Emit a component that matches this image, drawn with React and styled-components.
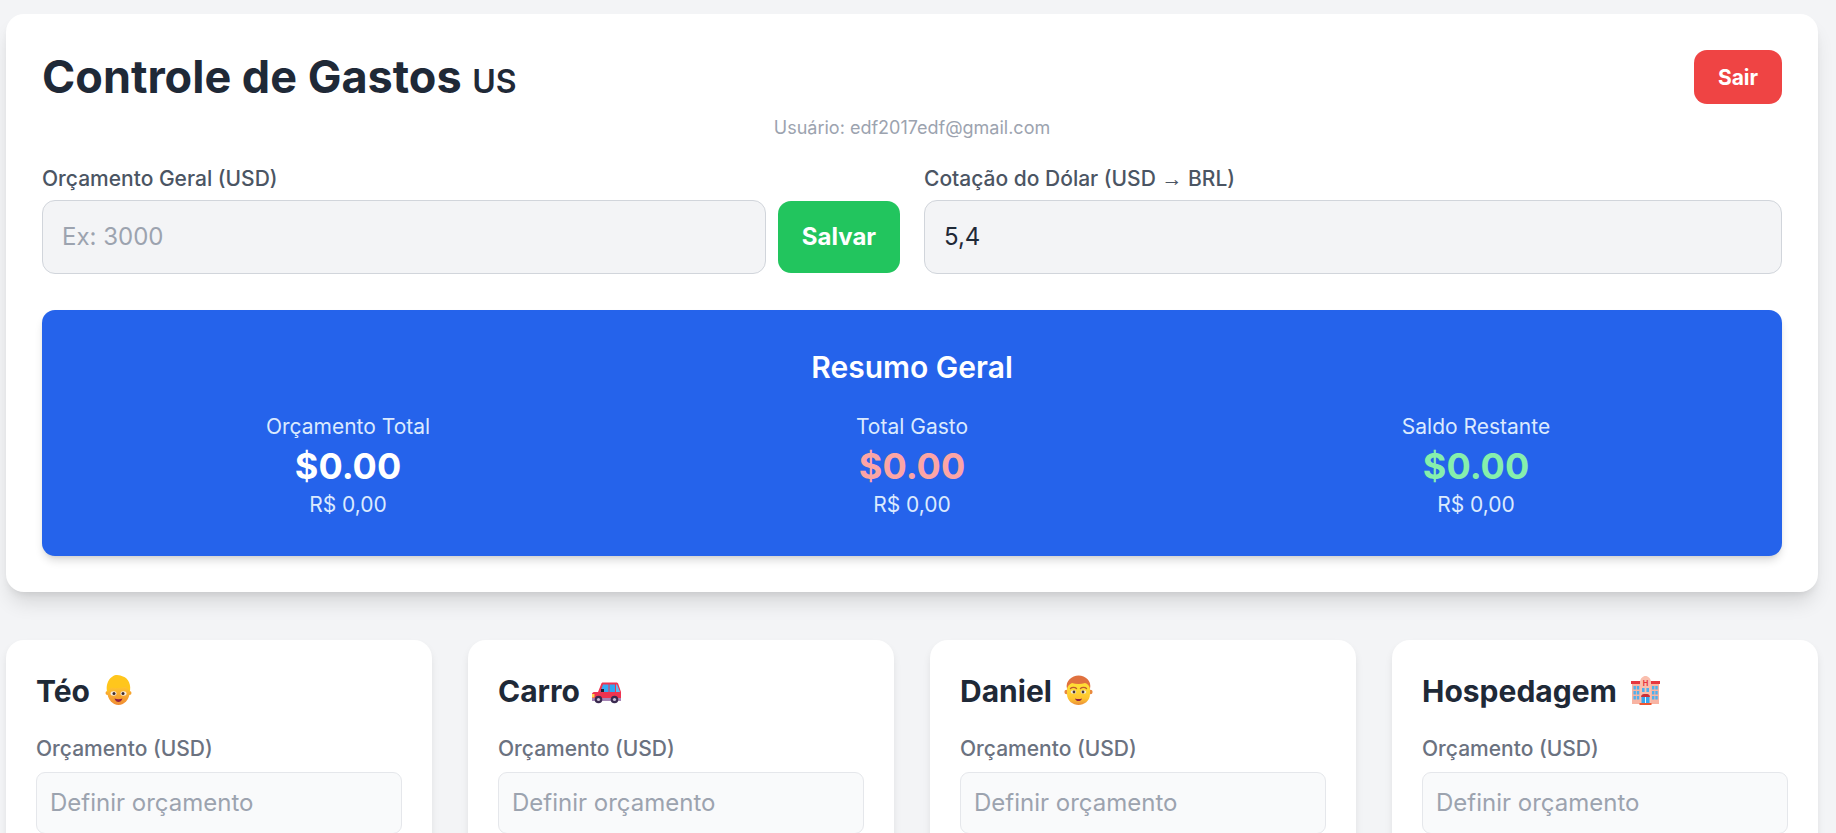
import { createGlobalStyle, styled } from "styled-components";

const GlobalStyle = createGlobalStyle`
  * { box-sizing: border-box; }
  html, body { margin: 0; height: 100%; overflow: hidden; }
  body {
    background: #f3f4f6;
    font-family: Inter, "Liberation Sans", sans-serif;
    color: #1f2937;
  }
`;

const Page = styled.div`
  padding: 14px 18px 0 6px;
`;

const Panel = styled.section`
  background: #fff;
  border-radius: 18px;
  padding: 36px;
  box-shadow: 0 14px 20px -4px rgba(0, 0, 0, 0.12), 0 5px 8px -4px rgba(0, 0, 0, 0.1);
`;

const Header = styled.header`
  display: flex;
  justify-content: space-between;
  align-items: center;
  height: 54px;
`;

const Title = styled.h1`
  margin: 0;
  font-size: 45px;
  line-height: 54px;
  font-weight: 700;
  color: #1f2937;
`;

const Flag = styled.span`
  font-size: 32px;
  line-height: 1;
  font-weight: 600;
`;

const LogoutButton = styled.button`
  height: 54px;
  width: 88px;
  border: 0;
  border-radius: 13px;
  background: #ef4444;
  color: #fff;
  font: 700 21px Inter, sans-serif;
`;

const UserLine = styled.p`
  margin: 10px 0 0;
  text-align: center;
  font-size: 18px;
  line-height: 27px;
  color: #9ca3af;
`;

const FormGrid = styled.div`
  display: grid;
  grid-template-columns: 1fr 1fr;
  gap: 24px;
  margin-top: 22px;
`;

const Field = styled.div`
  display: flex;
  flex-direction: column;
  gap: 5px;
`;

const Label = styled.label`
  font-size: 21px;
  line-height: 32px;
  font-weight: 500;
  color: #4b5563;
`;

const Arrow = styled.span`
  font-family: "Liberation Sans", sans-serif;
  font-weight: 400;
`;

const InputRow = styled.div`
  display: flex;
  gap: 12px;
`;

const MainInput = styled.input`
  flex: 1;
  min-width: 0;
  height: 74px;
  padding: 0 19px 2px;
  background: #f3f4f6;
  border: 1px solid #d1d5db;
  border-radius: 13px;
  font: 400 24px Inter, sans-serif;
  color: #1f2937;
  &::placeholder { color: #9ca3af; opacity: 1; }
`;

const SaveButton = styled.button`
  width: 122px;
  height: 72px;
  margin-top: 1px;
  padding: 0 0 2px;
  border: 0;
  border-radius: 13px;
  background: #22c55e;
  color: #fff;
  font: 700 24px Inter, sans-serif;
`;

const Summary = styled.div`
  margin-top: 36px;
  background: #2563eb;
  border-radius: 13px;
  padding: 37px 24px;
  height: 246px;
  color: #fff;
  box-shadow: 0 6px 10px -2px rgba(0, 0, 0, 0.16), 0 2px 4px -2px rgba(0, 0, 0, 0.1);
`;

const SummaryTitle = styled.h2`
  margin: 0;
  text-align: center;
  font-size: 30px;
  line-height: 41px;
  font-weight: 600;
`;

const StatGrid = styled.div`
  display: grid;
  grid-template-columns: repeat(3, 1fr);
  margin-top: 23px;
`;

const Stat = styled.div`
  text-align: center;
`;

const StatLabel = styled.div`
  font-size: 21px;
  line-height: 32px;
  color: #dbeafe;
`;

const StatValue = styled.div`
  font-size: 36px;
  line-height: 47px;
  font-weight: 700;
  color: ${props => props.$color};
`;

const StatBrl = styled.div`
  font-size: 21px;
  line-height: 30px;
  color: #dbeafe;
`;

const CardGrid = styled.div`
  display: grid;
  grid-template-columns: repeat(4, 1fr);
  gap: 36px;
  margin-top: 48px;
`;

const Card = styled.article`
  background: #fff;
  border-radius: 18px;
  padding: 29px 30px 30px;
  box-shadow: 0 5px 9px -1px rgba(0, 0, 0, 0.1);
`;

const CardTitle = styled.h3`
  display: flex;
  align-items: center;
  gap: 11px;
  margin: 0;
  font-size: 30px;
  line-height: 44px;
  font-weight: 700;
  color: #1f2937;
`;

const CardLabel = styled.label`
  display: block;
  margin-top: 20px;
  font-size: 21px;
  line-height: 32px;
  font-weight: 500;
  color: #6b7280;
`;

const CardInput = styled.input`
  display: block;
  width: 100%;
  height: 62px;
  margin-top: 7px;
  padding: 0 13px 2px;
  background: #f9fafb;
  border: 1px solid #e5e7eb;
  border-radius: 9px;
  font: 400 24px Inter, sans-serif;
  &::placeholder { color: #9ca3af; opacity: 1; }
`;

const EmojiSvg = styled.svg`
  width: 32px;
  height: 32px;
  flex: none;
`;

const BoyEmoji = () => (
  <EmojiSvg viewBox="0 0 32 32">
    <defs>
      <linearGradient id="boyFace" x1="0" y1="0" x2="0" y2="1">
        <stop offset="0.3" stopColor="#ffc22e" />
        <stop offset="1" stopColor="#f08c34" />
      </linearGradient>
    </defs>
    <circle cx="6.5" cy="18" r="2" fill="#f7a52f" />
    <circle cx="28.5" cy="18" r="2" fill="#f7a52f" />
    <ellipse cx="17.5" cy="17.5" rx="11" ry="12.5" fill="url(#boyFace)" />
    <path d="M6.5 18C3.5 8 10 0 16 0C19 0 20 1 22 1.5C27 3 31 10 28.5 18C28 15 26.5 12.5 24 11.5C20 13.5 13 13 10 12.5C8 14 7 16 6.5 18Z" fill="#ffc61c" />
    <ellipse cx="12.5" cy="18.5" rx="3" ry="2.2" fill="#f7ecdc" />
    <ellipse cx="22.5" cy="18.5" rx="3" ry="2.2" fill="#f7ecdc" />
    <circle cx="13" cy="18.5" r="1.5" fill="#3f2a2a" />
    <circle cx="22" cy="18.5" r="1.5" fill="#3f2a2a" />
    <path d="M13.5 23.5C16 24.5 19 24.5 21.5 23.5C20.8 26 19 27 17.5 27C16 27 14.2 26 13.5 23.5Z" fill="#8f1f3f" />
  </EmojiSvg>
);

const ManEmoji = () => (
  <EmojiSvg viewBox="0 0 32 32">
    <defs>
      <linearGradient id="manFace" x1="0" y1="0" x2="0" y2="1">
        <stop offset="0.3" stopColor="#ffdc35" />
        <stop offset="0.75" stopColor="#fec32f" />
        <stop offset="1" stopColor="#ea8d3a" />
      </linearGradient>
    </defs>
    <circle cx="3.6" cy="17" r="2.2" fill="#e98a3e" />
    <circle cx="27.4" cy="17" r="2.2" fill="#e98a3e" />
    <path d="M4 9C4 4 27 4 27 9V19C27 26 21 30 15.5 30C10 30 4 26 4 19Z" fill="url(#manFace)" />
    <path d="M4 14C2 6 9 0.5 15.5 0.5C22.5 0.5 29 6 27 14C26.5 11 24.5 8.5 22 8C18 9.2 13 9.2 9 8C6.5 9 4.5 11 4 14Z" fill="#e0713f" />
    <path d="M7.5 13.5C9 12 12 12 13.5 13.5M17.5 13.5C19 12 22 12 23.5 13.5" fill="none" stroke="#bd5a30" strokeWidth="1.4" strokeLinecap="round" />
    <ellipse cx="10.5" cy="17" rx="2.8" ry="1.8" fill="#f5efdf" />
    <ellipse cx="20.5" cy="17" rx="2.8" ry="1.8" fill="#f5efdf" />
    <circle cx="11" cy="17" r="1.4" fill="#4a3535" />
    <circle cx="20" cy="17" r="1.4" fill="#4a3535" />
    <path d="M12 23.5C14 24.3 17 24.3 19 23.5C18.4 25.6 17 26 15.5 26C14 26 12.6 25.6 12 23.5Z" fill="#8f1f3f" />
  </EmojiSvg>
);

const CarEmoji = () => (
  <EmojiSvg viewBox="0 0 32 32">
    <path d="M7 17L10 9.5C10.5 8 11 7.5 12 7.5H25C26.5 7.5 27 8 27.5 9.5L30 17V24H1V19C1 18 2 17 3 17Z" fill="#ef3350" />
    <path d="M12 9.5H17.5V17H9.5Z" fill="#37a9f4" />
    <path d="M18.5 9.5H24V17H18.5Z" fill="#2ea6f2" />
    <path d="M25 9.5H26L29 17H25Z" fill="#5bbdf5" />
    <rect x="10" y="14" width="3" height="3" fill="#1c2033" />
    <rect x="1" y="19" width="2.5" height="3.5" fill="#ffd34d" />
    <rect x="1" y="23" width="29" height="3" fill="#a585b5" />
    <circle cx="7.5" cy="24.5" r="3.8" fill="#3a2a50" />
    <circle cx="7.5" cy="24.5" r="1.6" fill="#cdbfd8" />
    <circle cx="23.5" cy="24.5" r="3.8" fill="#3a2a50" />
    <circle cx="23.5" cy="24.5" r="1.6" fill="#cdbfd8" />
  </EmojiSvg>
);

const HotelEmoji = () => (
  <EmojiSvg viewBox="0 0 32 32">
    <rect x="4" y="6" width="27" height="23" fill="#f8b4a3" />
    <path d="M12 8C12 3 15 1 17.5 1C20 1 23 3 23 8V29H12Z" fill="#fabfae" />
    <rect x="3" y="6" width="9" height="3" fill="#e6363f" />
    <rect x="23" y="6" width="9" height="3" fill="#e6363f" />
    <text x="17.5" y="10.5" fontFamily="Inter, sans-serif" fontSize="7.5" fontWeight="700" textAnchor="middle" fill="#e6363f">H</text>
    <g fill="#4fb0ee">
      <rect x="5.5" y="11" width="2.4" height="3.5" />
      <rect x="8.8" y="11" width="2.4" height="3.5" />
      <rect x="5.5" y="16" width="2.4" height="3.5" />
      <rect x="8.8" y="16" width="2.4" height="3.5" />
      <rect x="5.5" y="21" width="2.4" height="3.5" />
      <rect x="8.8" y="21" width="2.4" height="3.5" />
      <rect x="24" y="11" width="2.4" height="3.5" />
      <rect x="27.3" y="11" width="2.4" height="3.5" />
      <rect x="24" y="16" width="2.4" height="3.5" />
      <rect x="27.3" y="16" width="2.4" height="3.5" />
      <rect x="24" y="21" width="2.4" height="3.5" />
      <rect x="27.3" y="21" width="2.4" height="3.5" />
      <rect x="14" y="13" width="2.6" height="4" />
      <rect x="18.4" y="13" width="2.6" height="4" />
    </g>
    <rect x="13.5" y="22" width="8" height="6" fill="#37a7ef" />
    <rect x="17" y="22" width="1" height="6" fill="#e9f3f9" />
    <path d="M13 22C13 19.5 15 19 17.5 19C20 19 22 19.5 22 22Z" fill="#c9303a" />
    <rect x="11.5" y="28" width="12" height="2" fill="#f0552f" />
  </EmojiSvg>
);

const stats = [
  { label: "Orçamento Total", color: "#fff" },
  { label: "Total Gasto", color: "#fca5a5" },
  { label: "Saldo Restante", color: "#86efac" },
];

const cards = [
  { name: "Téo", emoji: <BoyEmoji /> },
  { name: "Carro", emoji: <CarEmoji /> },
  { name: "Daniel", emoji: <ManEmoji /> },
  { name: "Hospedagem", emoji: <HotelEmoji /> },
];

export default function App() {
  return (
    <Page>
      <GlobalStyle />
      <Panel>
        <Header>
          <Title>Controle de Gastos <Flag>US</Flag></Title>
          <LogoutButton>Sair</LogoutButton>
        </Header>
        <UserLine>Usuário: edf2017edf@gmail.com</UserLine>
        <FormGrid>
          <Field>
            <Label>Orçamento Geral (USD)</Label>
            <InputRow>
              <MainInput placeholder="Ex: 3000" />
              <SaveButton>Salvar</SaveButton>
            </InputRow>
          </Field>
          <Field>
            <Label>Cotação do Dólar (USD <Arrow>→</Arrow> BRL)</Label>
            <MainInput defaultValue="5,4" />
          </Field>
        </FormGrid>
        <Summary>
          <SummaryTitle>Resumo Geral</SummaryTitle>
          <StatGrid>
            {stats.map(s => (
              <Stat key={s.label}>
                <StatLabel>{s.label}</StatLabel>
                <StatValue $color={s.color}>$0.00</StatValue>
                <StatBrl>R$ 0,00</StatBrl>
              </Stat>
            ))}
          </StatGrid>
        </Summary>
      </Panel>
      <CardGrid>
        {cards.map(card => (
          <Card key={card.name}>
            <CardTitle>{card.name}{card.emoji}</CardTitle>
            <CardLabel>Orçamento (USD)</CardLabel>
            <CardInput placeholder="Definir orçamento" />
          </Card>
        ))}
      </CardGrid>
    </Page>
  );
}
